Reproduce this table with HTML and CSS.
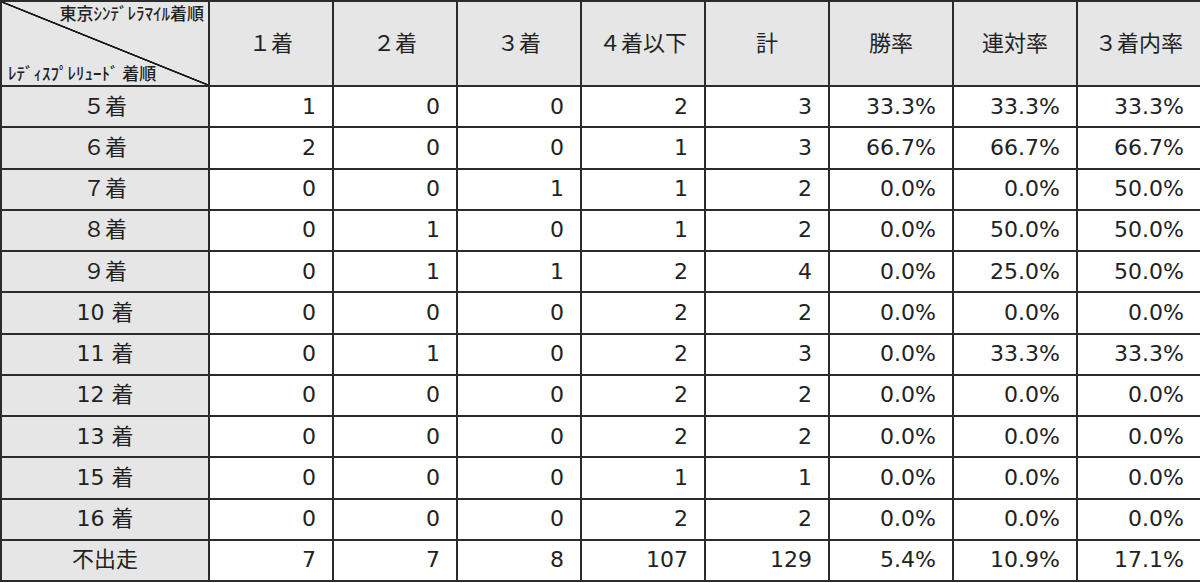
FILE: index.html
```html
<!DOCTYPE html>
<html lang="ja">
<head>
<meta charset="utf-8">
<title>着順表</title>
<link rel="stylesheet" href="styles.css">
</head>
<body>
<table class="stats">
  <colgroup>
    <col class="col-head">
    <col span="8" class="col-num">
  </colgroup>
  <thead>
    <tr class="row-head">
      <th class="corner">
        <div class="corner-inner">
          <span class="corner-top">東京ｼﾝﾃﾞﾚﾗﾏｲﾙ着順</span>
          <span class="corner-bottom">ﾚﾃﾞｨｽﾌﾟﾚﾘｭｰﾄﾞ 着順</span>
        </div>
      </th>
      <th>１着</th>
      <th>２着</th>
      <th>３着</th>
      <th>４着以下</th>
      <th>計</th>
      <th>勝率</th>
      <th>連対率</th>
      <th>３着内率</th>
    </tr>
  </thead>
  <tbody>
    <tr><th>５着</th><td>1</td><td>0</td><td>0</td><td>2</td><td>3</td><td>33.3%</td><td>33.3%</td><td>33.3%</td></tr>
    <tr><th>６着</th><td>2</td><td>0</td><td>0</td><td>1</td><td>3</td><td>66.7%</td><td>66.7%</td><td>66.7%</td></tr>
    <tr><th>７着</th><td>0</td><td>0</td><td>1</td><td>1</td><td>2</td><td>0.0%</td><td>0.0%</td><td>50.0%</td></tr>
    <tr><th>８着</th><td>0</td><td>1</td><td>0</td><td>1</td><td>2</td><td>0.0%</td><td>50.0%</td><td>50.0%</td></tr>
    <tr><th>９着</th><td>0</td><td>1</td><td>1</td><td>2</td><td>4</td><td>0.0%</td><td>25.0%</td><td>50.0%</td></tr>
    <tr><th>10 着</th><td>0</td><td>0</td><td>0</td><td>2</td><td>2</td><td>0.0%</td><td>0.0%</td><td>0.0%</td></tr>
    <tr><th>11 着</th><td>0</td><td>1</td><td>0</td><td>2</td><td>3</td><td>0.0%</td><td>33.3%</td><td>33.3%</td></tr>
    <tr><th>12 着</th><td>0</td><td>0</td><td>0</td><td>2</td><td>2</td><td>0.0%</td><td>0.0%</td><td>0.0%</td></tr>
    <tr><th>13 着</th><td>0</td><td>0</td><td>0</td><td>2</td><td>2</td><td>0.0%</td><td>0.0%</td><td>0.0%</td></tr>
    <tr><th>15 着</th><td>0</td><td>0</td><td>0</td><td>1</td><td>1</td><td>0.0%</td><td>0.0%</td><td>0.0%</td></tr>
    <tr><th>16 着</th><td>0</td><td>0</td><td>0</td><td>2</td><td>2</td><td>0.0%</td><td>0.0%</td><td>0.0%</td></tr>
    <tr><th>不出走</th><td>7</td><td>7</td><td>8</td><td>107</td><td>129</td><td>5.4%</td><td>10.9%</td><td>17.1%</td></tr>
  </tbody>
</table>
</body>
</html>
```

FILE: styles.css
```css
html, body {
  margin: 0;
  padding: 0;
  background: #ffffff;
}

.stats {
  width: 1200px;
  table-layout: fixed;
  border-collapse: collapse;
  font-family: "DejaVu Sans", "Noto Sans CJK JP", sans-serif;
  font-size: 22px;
  color: #222222;
}

.col-head { width: 208px; }
.col-num { width: 124px; }

.stats th,
.stats td {
  border: 2px solid #2b2b2b;
  padding: 0 16px 0 0;
  line-height: 1;
  font-weight: normal;
  white-space: nowrap;
}

.stats thead th {
  background: #e6e6e6;
  text-align: center;
  padding: 0;
}

.row-head { height: 85px; }

.stats tbody tr { height: 41.25px; }

.stats tbody th {
  background: #e6e6e6;
  text-align: center;
  padding: 0;
}

.stats td {
  text-align: right;
  background: #ffffff;
}

.stats th.corner {
  padding: 0;
  background:
    linear-gradient(to top right,
      transparent calc(50% - 1.2px),
      #1a1a1a calc(50% - 0.6px),
      #1a1a1a calc(50% + 0.6px),
      transparent calc(50% + 1.2px)),
    #e6e6e6;
}

.corner-inner {
  height: 83px;
  display: flex;
  flex-direction: column;
  justify-content: space-between;
  font-family: "Noto Sans CJK JP", sans-serif;
  font-size: 17px;
  font-weight: 500;
  line-height: 1;
  padding: 2px 4px 4px 6px;
  box-sizing: border-box;
}

.corner-top {
  text-align: right;
}

.corner-bottom {
  text-align: left;
}
```
